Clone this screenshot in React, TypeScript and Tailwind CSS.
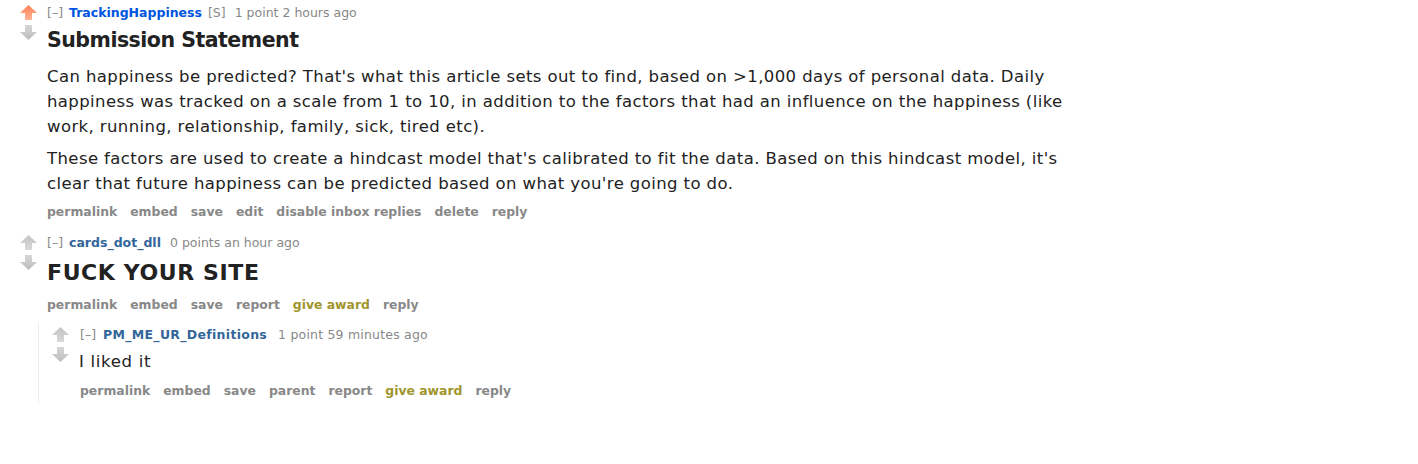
import React from "react";

const font = { fontFamily: "Verdana, 'DejaVu Sans', sans-serif" };

function Arrows({ up }: { up?: boolean }) {
  const upId = up ? "gup-o" : "gup-g";
  return (
    <div className="flex flex-col items-center w-[19px] gap-[5px]">
      <svg width="17" height="15" viewBox="0 0 17 15">
        <defs>
          <linearGradient id={upId} x1="0" y1="0" x2="0" y2="1">
            <stop offset="0" stopColor={up ? "#ff7f50" : "#c4c4c4"} />
            <stop offset="1" stopColor={up ? "#ffb59a" : "#d8d8d8"} />
          </linearGradient>
        </defs>
        <path d="M8.5 0 L17 8 L12 8 L12 15 L5 15 L5 8 L0 8 Z" fill={`url(#${upId})`} />
      </svg>
      <svg width="17" height="15" viewBox="0 0 17 15">
        <defs>
          <linearGradient id="gdn" x1="0" y1="0" x2="0" y2="1">
            <stop offset="0" stopColor="#d6d6d6" />
            <stop offset="1" stopColor="#bdbdbd" />
          </linearGradient>
        </defs>
        <path d="M5 0 L12 0 L12 7 L17 7 L8.5 15 L0 7 L5 7 Z" fill="url(#gdn)" />
      </svg>
    </div>
  );
}

function Buttons({ items }: { items: string[] }) {
  return (
    <div className="flex gap-[13px] text-[12.4px] font-bold text-[#888] leading-[16px]">
      {items.map((t) => (
        <span key={t} className={t === "give award" ? "text-[#a0952c]" : ""}>
          {t}
        </span>
      ))}
    </div>
  );
}

function Tagline({ user, userColor, extra, meta }: { user: string; userColor: string; extra?: string; meta: string }) {
  return (
    <div className="text-[12.5px] leading-[16px] text-[#888] flex gap-[6px] items-baseline whitespace-nowrap">
      <span>[–]</span>
      <span className={`font-bold ${userColor}`}>{user}</span>
      {extra && <span>{extra}</span>}
      <span className="ml-[3px]">{meta}</span>
    </div>
  );
}

export default function App() {
  return (
    <div className="w-[1418px] h-[464px] bg-white text-[#222] pt-[5px]" style={font}>
      <div className="pl-[19px]">
        {/* Comment 1 */}
        <div className="flex gap-[9px]">
          <Arrows up />
          <div className="flex flex-col">
            <Tagline user="TrackingHappiness" userColor="text-[#0055df]" extra="[S]" meta="1 point 2 hours ago" />
            <div className="text-[20.5px] tracking-[-0.5px] font-bold leading-[26px] mt-[6px]">Submission Statement</div>
            <div className="text-[16.5px] tracking-[0.4px] leading-[25px] mt-[10.5px] w-[1045px]">
              <p>
                Can happiness be predicted? That's what this article sets out to find, based on &gt;1,000 days of personal data. Daily happiness was tracked on a scale from 1 to 10, in addition to the factors that had an influence on the happiness (like work, running, relationship, family, sick, tired etc).
              </p>
              <p className="mt-[7px]">
                These factors are used to create a hindcast model that's calibrated to fit the data. Based on this hindcast model, it's clear that future happiness can be predicted based on what you're going to do.
              </p>
            </div>
            <div className="mt-[8.5px]">
              <Buttons items={["permalink", "embed", "save", "edit", "disable inbox replies", "delete", "reply"]} />
            </div>
          </div>
        </div>

        {/* Comment 2 */}
        <div className="flex gap-[9px] mt-[15px]">
          <Arrows />
          <div className="flex flex-col">
            <Tagline user="cards_dot_dll" userColor="text-[#336699]" meta="0 points an hour ago" />
            <div className="text-[22px] tracking-[0.6px] font-bold leading-[26px] mt-[9px]">FUCK YOUR SITE</div>
            <div className="mt-[11px]">
              <Buttons items={["permalink", "embed", "save", "report", "give award", "reply"]} />
            </div>
          </div>
        </div>

        {/* Child */}
        <div className="ml-[19px] mt-[10px] border-l border-[#ececec] pl-[12px] pt-[4px] pb-[4px]">
          <div className="flex gap-[10px]">
            <Arrows />
            <div className="flex flex-col">
              <div className="text-[12.5px] leading-[16px] text-[#888] flex items-baseline whitespace-nowrap">
                <span>[–]</span>
                <span className="font-bold text-[#336699] ml-[7px] tracking-[0.3px]">PM_ME_UR_Definitions</span>
                <span className="ml-[11px] tracking-[0.2px]">1 point 59 minutes ago</span>
              </div>
              <div className="text-[16.5px] tracking-[0.7px] leading-[22px] mt-[8px] -ml-[1px]">I liked it</div>
              <div className="mt-[10px]">
                <Buttons items={["permalink", "embed", "save", "parent", "report", "give award", "reply"]} />
              </div>
            </div>
          </div>
        </div>
      </div>
    </div>
  );
}
